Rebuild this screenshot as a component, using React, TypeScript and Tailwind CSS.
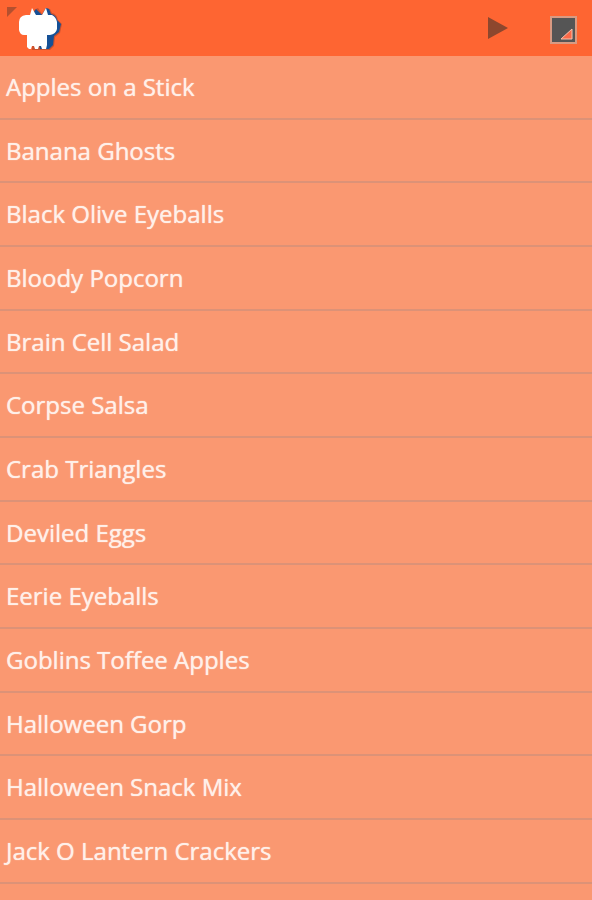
const recipes = [
  'Apples on a Stick',
  'Banana Ghosts',
  'Black Olive Eyeballs',
  'Bloody Popcorn',
  'Brain Cell Salad',
  'Corpse Salsa',
  'Crab Triangles',
  'Deviled Eggs',
  'Eerie Eyeballs',
  'Goblins Toffee Apples',
  'Halloween Gorp',
  'Halloween Snack Mix',
  'Jack O Lantern Crackers',
];

function SkullLogo() {
  return (
    <svg className="h-14 w-16" viewBox="0 0 64 56" aria-hidden="true">
      <path d="M7 7H17L7 17Z" fill="#b4502f" />
      <path
        d="M34 10L38 8L42 14L46 8L50 9L52 13Q57 14 58 20L62 24L60 33L55 37L54 46L50 50H32Z"
        fill="#8b3a27"
        opacity=".45"
      />
      <path
        d="M34 12L36 9L42 15L46 8L49 9L51 14Q56 15 57 20L61 24L59 32L54 36L53 45L49 49H40Z"
        fill="#155096"
      />
      <path
        d="M30 15L32 8L36 15H42L46 8L48 15H52Q56 17 57 22V29Q56 34 50 35H47V45L46 49H42L41 46H39L38 49H35L34 46H32L31 49H29L27 47V35H24Q20 35 19 30V22Q19 16 26 15Z"
        fill="#fff"
      />
    </svg>
  );
}

export default function App() {
  return (
    <div className="min-h-screen bg-[#fa9871] font-['Open_Sans','Noto_Sans',sans-serif]">
      <header className="flex h-14 items-center justify-between bg-[#fe6532] pr-3">
        <button type="button" aria-label="Back">
          <SkullLogo />
        </button>
        <div className="flex items-center gap-8">
          <button type="button" aria-label="Play">
            <svg className="h-8 w-8" viewBox="0 0 32 32" aria-hidden="true">
              <path d="M4 5L24 16L4 27Z" fill="#8d472e" />
            </svg>
          </button>
          <button type="button" aria-label="Choose color">
            <svg className="h-8 w-8" viewBox="0 0 32 32" aria-hidden="true">
              <rect x="3" y="5" width="25" height="26" fill="#555555" stroke="#d99a82" strokeWidth="2" />
              <path d="M24 17V27H13Z" fill="#fb6a49" stroke="#f8c3b0" strokeWidth="1" />
            </svg>
          </button>
        </div>
      </header>
      <ul>
        {recipes.map((name) => (
          <li
            key={name}
            className="h-16 border-b-2 border-[#dc9277] nth-[3n+2]:h-[63px]"
          >
            <a
              href="#"
              className="flex h-full items-center px-1.5 text-2xl text-[#fff0e9] text-shadow-[0_0_1px_#fff0e9]"
            >
              {name}
            </a>
          </li>
        ))}
      </ul>
    </div>
  );
}
